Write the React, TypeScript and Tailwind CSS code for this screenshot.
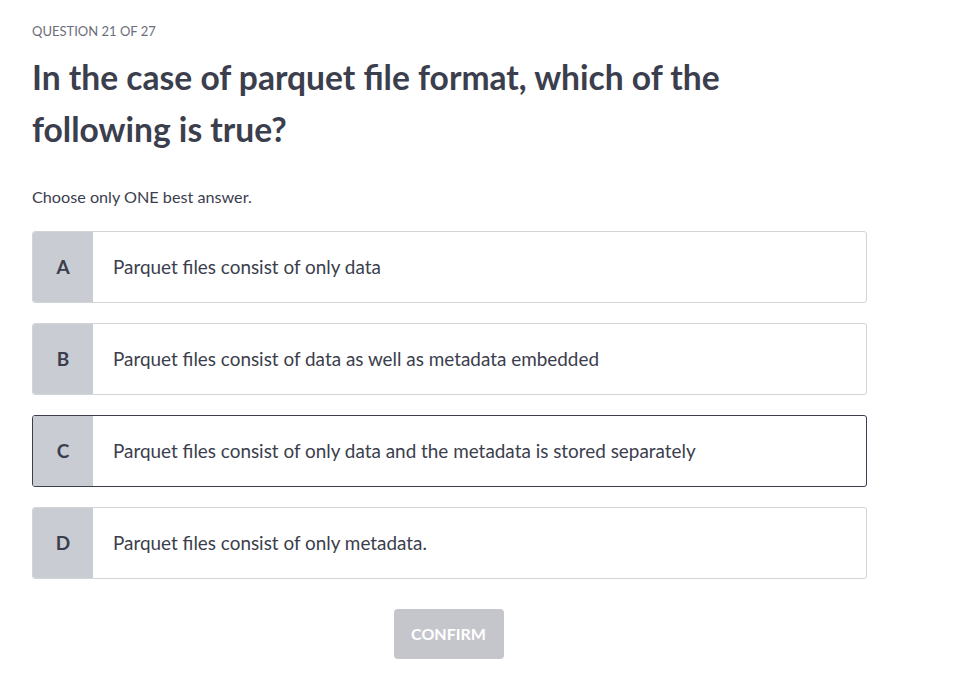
const options = [
  { key: "A", text: "Parquet files consist of only data" },
  { key: "B", text: "Parquet files consist of data as well as metadata embedded" },
  { key: "C", text: "Parquet files consist of only data and the metadata is stored separately" },
  { key: "D", text: "Parquet files consist of only metadata." },
]

export default function App() {
  const selected = "C"

  return (
    <div className="min-h-screen bg-white font-['Lato',sans-serif] text-[#3b3e4d]">
      <div className="pl-8 pt-[23px] w-[867px]">
        <p className="text-[13px] leading-4 text-[#6b6e7b] uppercase">Question 21 of 27</p>

        <h1 className="mt-[12px] text-[33.6px] font-bold leading-[52px] w-[760px]">
          In the case of parquet file format, which of the following is true?
        </h1>

        <p className="mt-[32px] text-[16.2px] leading-5">Choose only ONE best answer.</p>

        <div className="mt-[24px] flex flex-col gap-[20px]">
          {options.map((o) => (
            <div
              key={o.key}
              className={
                "flex h-[72px] rounded-[3px] border bg-white overflow-hidden " +
                (o.key === selected ? "border-[#3b3e4d]" : "border-[#d3d4da]")
              }
            >
              <div className="w-[60px] shrink-0 bg-[#caccd4] flex items-center justify-center text-[19px] font-bold">
                {o.key}
              </div>
              <div className="flex items-center pl-5 text-[18.9px]">{o.text}</div>
            </div>
          ))}
        </div>

        <div className="mt-[30px] pr-[2px] flex justify-center">
          <button className="h-[50px] w-[110px] rounded-[4px] bg-[#c5c6cc] text-white text-[16px] font-bold uppercase">
            Confirm
          </button>
        </div>
      </div>
    </div>
  )
}
